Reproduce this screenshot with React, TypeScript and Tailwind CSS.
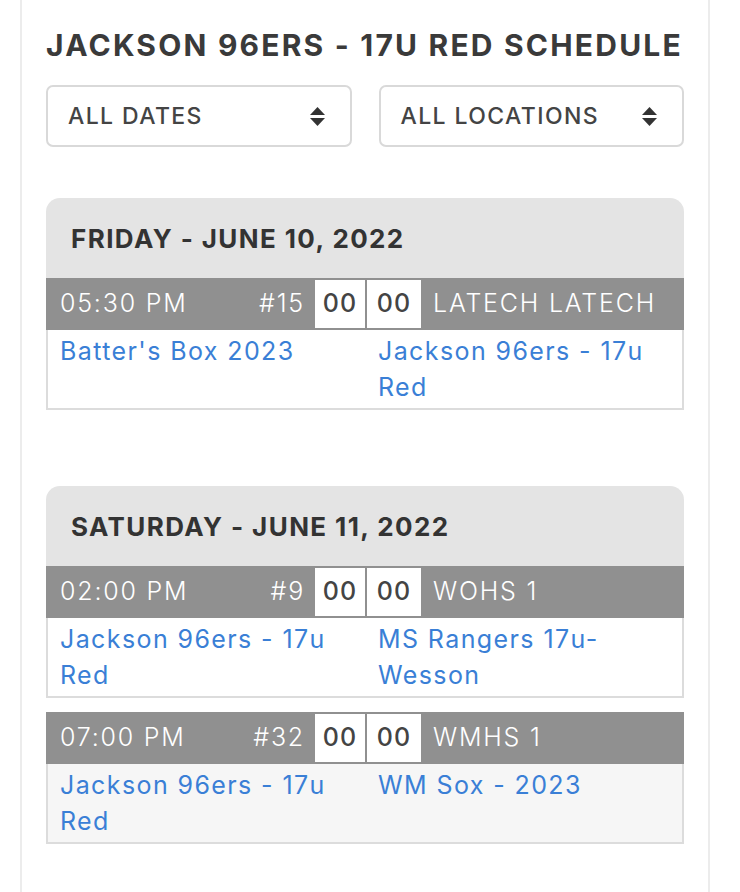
import React from 'react'

interface Game {
  time: string
  num: string
  home: string
  away: string
  location: string
}

interface Day {
  label: string
  games: Game[]
}

const days: Day[] = [
  {
    label: 'FRIDAY - JUNE 10, 2022',
    games: [
      { time: '05:30 PM', num: '#15', home: "Batter's Box 2023", away: 'Jackson 96ers - 17u Red', location: 'LATECH LATECH' },
    ],
  },
  {
    label: 'SATURDAY - JUNE 11, 2022',
    games: [
      { time: '02:00 PM', num: '#9', home: 'Jackson 96ers - 17u Red', away: 'MS Rangers 17u-Wesson', location: 'WOHS 1' },
      { time: '07:00 PM', num: '#32', home: 'Jackson 96ers - 17u Red', away: 'WM Sox - 2023', location: 'WMHS 1' },
    ],
  },
]

const font = { fontFamily: 'Inter, "Open Sans", sans-serif' }

function Arrows() {
  return (
    <svg width="15" height="19" viewBox="0 0 15 19" className="shrink-0">
      <path d="M7.5 0 L15 8 L0 8 Z" fill="#333" />
      <path d="M0 11 L15 11 L7.5 19 Z" fill="#333" />
    </svg>
  )
}

function Select({ label }: { label: string }) {
  return (
    <div className="h-[62px] border-2 border-[#d9d9d9] rounded-[7px] flex items-center justify-between pl-[20px] pr-[25px]">
      <span className="text-[23px] font-medium text-[#444] tracking-[1.4px]">{label}</span>
      <Arrows />
    </div>
  )
}

function GameRow({ game, striped }: { game: Game; striped: boolean }) {
  return (
    <div>
      <div className="h-[52px] bg-[#909090] flex items-center text-white text-[25px] font-light tracking-[1.8px]">
        <div className="w-[269px] flex justify-between pl-[14px] pr-[10px]">
          <span>{game.time}</span>
          <span>{game.num}</span>
        </div>
        <div className="w-[50px] h-[48px] bg-white flex items-center justify-center text-[#444] font-medium tracking-[1px]">00</div>
        <div className="w-[2px]" />
        <div className="w-[54px] h-[48px] bg-white flex items-center justify-center text-[#444] font-medium tracking-[1px]">00</div>
        <span className="pl-[12px] whitespace-nowrap">{game.location}</span>
      </div>
      <div
        className={`border-x-2 border-b-2 border-[#dcdcdc] flex py-[3px] text-[25px] leading-[36px] tracking-[1.4px] text-[#3a7fd6] ${
          striped ? 'bg-[#f6f6f6]' : 'bg-white'
        }`}
      >
        <div className="w-[318px] pl-[12px] pr-[8px]">{game.home}</div>
        <div className="flex-1 pl-[12px] pr-[10px]">{game.away}</div>
      </div>
    </div>
  )
}

export default function App() {
  return (
    <div className="w-[740px] h-[892px] bg-white overflow-hidden" style={font}>
      <div className="ml-[20px] w-[690px] h-full border-x-2 border-[#ececec] px-[24px] pt-[27px]">
        <h1 className="text-[30px] font-bold text-[#3a3a3a] leading-[36px] tracking-[2.2px] whitespace-nowrap">
          JACKSON 96ERS - 17U RED SCHEDULE
        </h1>
        <div className="grid grid-cols-2 gap-[27px] mt-[22px]">
          <Select label="ALL DATES" />
          <Select label="ALL LOCATIONS" />
        </div>

        <div className="flex flex-col gap-[76px] mt-[51px]">
          {days.map(day => (
            <div key={day.label}>
              <div className="h-[80px] bg-[#e4e4e4] rounded-t-[14px] flex items-center px-[25px]">
                <span className="text-[26px] font-bold text-[#333] tracking-[1.4px]">{day.label}</span>
              </div>
              <div className="flex flex-col gap-[14px]">
                {day.games.map((g, i) => (
                  <GameRow key={g.num} game={g} striped={i % 2 === 1} />
                ))}
              </div>
            </div>
          ))}
        </div>
      </div>
    </div>
  )
}
